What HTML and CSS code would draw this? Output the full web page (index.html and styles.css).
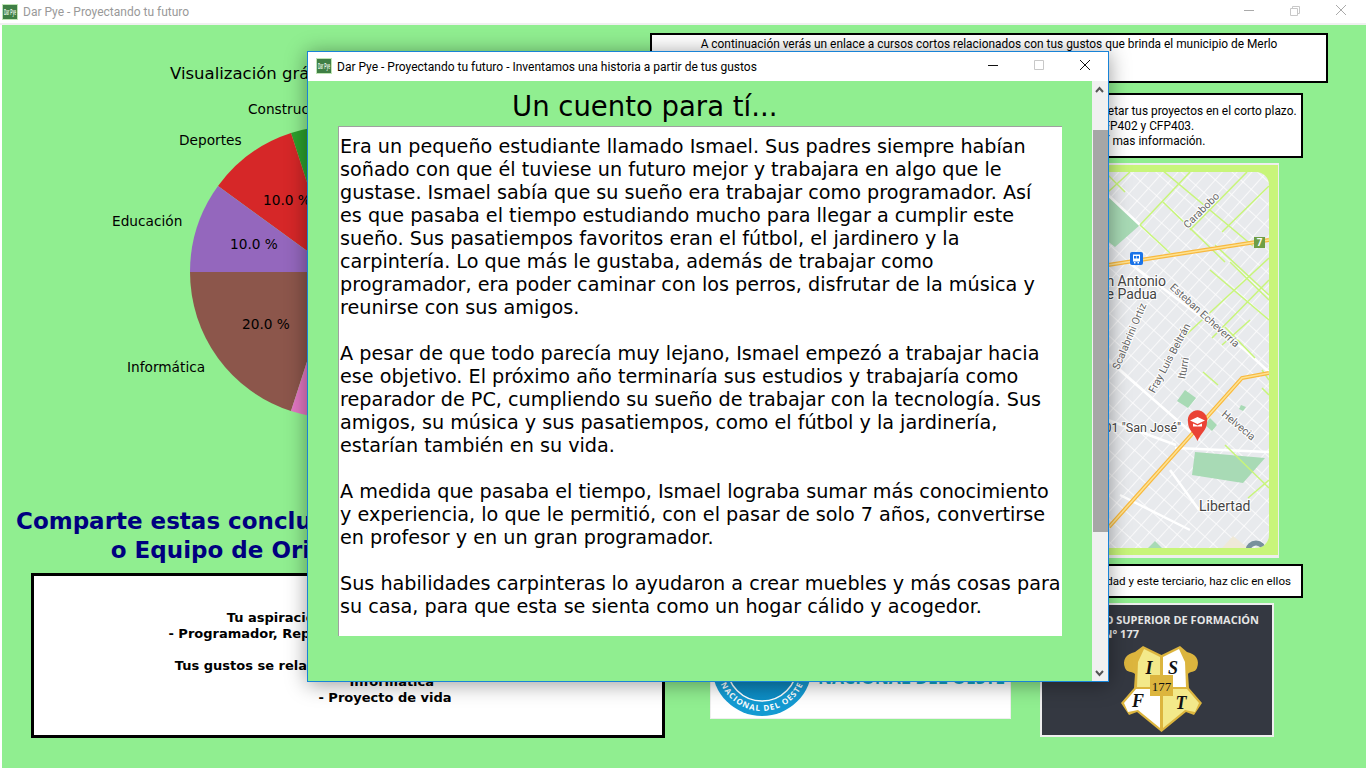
FILE: index.html
```html
<!DOCTYPE html>
<html lang="es">
<head>
    <meta charset="UTF-8">
    <meta name="viewport" content="width=device-width, initial-scale=1.0">
    <title>Dar Pye - Proyectando tu futuro</title>
    <link rel="stylesheet" href="styles.css">
</head>
<body>

<div class="app">
    <div class="titlebar main-titlebar">
        <svg class="app-icon" viewBox="0 0 16 16"><rect width="16" height="16" fill="#bfe5b4"/><rect x="1" y="1" width="14" height="14" fill="#3f7f45"/><text x="2" y="11" class="app-icon-text" textLength="12" lengthAdjust="spacingAndGlyphs">Dar Pye</text></svg>
        <span class="titlebar-text">Dar Pye - Proyectando tu futuro</span>
        <div class="window-buttons faded">
            <svg class="win-btn" viewBox="0 0 46 24"><path d="M18 10.500h10" /></svg>
            <svg class="win-btn light" viewBox="0 0 46 24"><path d="M18.500 8.500h7v7h-7zM20.500 8.500v-2h7v7h-2" /></svg>
            <svg class="win-btn" viewBox="0 0 46 24"><path d="M18 5l10 10M28 5L18 15" /></svg>
        </div>
    </div>

    <div class="main">
        <div class="left-col">
            <svg class="pie" viewBox="2 25 663 480">
                <text x="170" y="79" class="pie-title">Visualización gráfica de tus gustos</text>
                <path d="M336 272L381 133A146 146 0 0 0 291 133Z" fill="#2ca02c"/>
                <path d="M336 272L291 133A146 146 0 0 0 218 186Z" fill="#d62728"/>
                <path d="M336 272L218 186A146 146 0 0 0 190 272Z" fill="#9467bd"/>
                <path d="M336 272L190 272A146 146 0 0 0 291 411Z" fill="#8c564b"/>
                <path d="M336 272L291 411A146 146 0 0 0 381 411Z" fill="#e377c2"/>
                <path d="M336 272L381 411A146 146 0 0 0 482 272Z" fill="#7f7f7f"/>
                <path d="M336 272L482 272A146 146 0 0 0 381 133Z" fill="#1f77b4"/>
                <text x="248" y="114" class="pie-label">Construcción</text>
                <text x="179" y="145" class="pie-label">Deportes</text>
                <text x="112" y="226" class="pie-label">Educación</text>
                <text x="127" y="372" class="pie-label">Informática</text>
                <text x="263" y="205" class="pie-label">10.0 %</text>
                <text x="230" y="249" class="pie-label">10.0 %</text>
                <text x="242" y="329" class="pie-label">20.0 %</text>
            </svg>
            <h2 class="share-title">Comparte estas conclusiones con tu docente tutor o<br>o Equipo de Orientación Educacional</h2>
            <div class="summary">
                Tu aspiración profesional para el futuro es:<br>
                - Programador, Reparador de PCs, Profesor de Informática.<br>
                <br>
                Tus gustos se relacionan con las siguientes áreas de vida<br>
                &nbsp;&nbsp;&nbsp;Informática<br>
                - Proyecto de vida
            </div>
        </div>

        <div class="right-col">
            <div class="note note-courses">A continuación verás un enlace a cursos cortos relacionados con tus gustos que brinda el municipio de Merlo</div>
            <div class="note note-cfp">Para concretar tus proyectos en el corto plazo.<br>Ve a los CFP402 y CFP403.<br>Busca aquí mas información.</div>

            <svg class="map" viewBox="1035 163 244 395">
                <defs>
                    <pattern id="streets-a" width="11" height="17" patternUnits="userSpaceOnUse" patternTransform="rotate(42)">
                        <rect width="11" height="17" fill="#e8eaed"/>
                        <path d="M0 0V17M0 0H11" class="street"/>
                    </pattern>
                    <clipPath id="map-clip"><rect x="1035" y="172" width="234" height="376" rx="13"/></clipPath>
                </defs>
                <rect x="1035" y="163" width="244" height="395" fill="#eeeeee"/>
                <rect x="1035" y="165" width="243" height="390" fill="#c8f57a"/>
                <g clip-path="url(#map-clip)">
                    <rect x="1035" y="172" width="234" height="376" fill="url(#streets-a)"/>
                    <path d="M1100 188L1140 225L1115 247L1100 235Z M1185 390L1196 398L1188 408L1177 401Z M1195 452L1265 458L1243 483L1192 475Z M1210 418L1217 425L1212 431L1205 425Z M1241 405L1246 407L1243 411L1239 409Z M1155 541L1162 548L1148 548Z" fill="#a8dab5"/>
                    <path d="M1222 548L1233 536L1248 548Z" fill="#efe9d8"/>
                    <path d="M1128 262L1245 350L1269 372M1140 225L1108 195M1108 360L1200 440M1175 448L1269 452M1108 420L1176 445M1170 470L1199 510M1120 495L1190 530" class="road"/>
                    <path d="M1108 175L1125 192M1108 192L1130 172M1140 225L1190 172M1140 225L1170 253M1162 170L1253 246M1247 172L1190 230M1269 186L1222 232M1163 202L1225 262M1269 258L1175 345M1215 245L1269 295M1230 262L1269 300M1269 280L1212 338M1250 320L1222 345M1225 327L1255 358M1203 372L1218 385M1225 445L1269 488M1269 480L1248 498M1269 380L1262 370M1262 388L1269 395M1210 270L1269 320" class="green-line"/>
                    <path d="M1108 265L1269 240M1109 527L1242 378L1269 373" class="highway"/>
                    <path d="M1108 265L1269 240M1109 527L1242 378L1269 373" class="highway-core"/>
                    <text x="1201" y="214" class="map-street" text-anchor="middle" transform="rotate(-45 1201 210)">Carabobo</text>
                    <text x="1205" y="319" class="map-street" text-anchor="middle" transform="rotate(42 1205 315)">Esteban Echeverría</text>
                    <text x="1129" y="340" class="map-street" text-anchor="middle" transform="rotate(-67 1129 336)">Scalabrini Ortiz</text>
                    <text x="1169" y="362" class="map-street" text-anchor="middle" transform="rotate(-62 1169 358)">Fray Luis Beltrán</text>
                    <text x="1183" y="372" class="map-street" text-anchor="middle" transform="rotate(-80 1183 368)">Iturri</text>
                    <text x="1239" y="429" class="map-street" text-anchor="middle" transform="rotate(40 1239 425)">Helvecia</text>
                    <text x="1166" y="286" class="map-place" text-anchor="end">San Antonio</text>
                    <text x="1157" y="299" class="map-place" text-anchor="end">de Padua</text>
                    <text x="1181" y="432" class="map-place school" text-anchor="end">Escuela N° 401 "San José"</text>
                    <text x="1199" y="511" class="map-place">Libertad</text>
                    <circle cx="1256" cy="551" r="8" fill="none" stroke="#78909c" stroke-width="5"/>
                </g>
                <rect x="1254" y="237" width="11" height="11" fill="#6f9e45"/>
                <text x="1259.5" y="246" class="map-seven" text-anchor="middle">7</text>
                <rect x="1130" y="252" width="13" height="13" rx="2" fill="#1a73e8"/>
                <path d="M1133 254.500h7v7h-7zM1134 262h1.500v1.500h-1.500zM1137.500 262h1.500v1.500h-1.500z" fill="#fff"/>
                <path d="M1134 256h2.200v2.500h-2.200zM1136.800 256h2.200v2.500h-2.200z" fill="#1a73e8"/>
                <path d="M1197.500 441C1194 433 1188 430 1188 422A9.700 9.700 0 1 1 1207 422C1207 430 1201 433 1197.500 441Z" fill="#ea4335"/>
                <path d="M1197.500 417L1205 420.500L1197.500 424L1190 420.500ZM1193 423.500L1197.500 425.500L1202 423.500V426.500H1193Z" fill="#fff"/>
            </svg>

            <div class="note note-links">Para conocer más sobre esta universidad y este terciario, haz clic en ellos</div>

            <div class="logos">
                <svg class="logo-unlo" viewBox="710 603 301 116">
                    <defs>
                        <linearGradient id="seal" x1="0" y1="0" x2="0" y2="1"><stop offset="0" stop-color="#0e6ea8"/><stop offset="1" stop-color="#0d8fc6"/></linearGradient>
                        <path id="seal-arc" d="M717 666A45 45 0 0 0 807 666"/>
                    </defs>
                    <rect x="710" y="603" width="301" height="116" fill="#eeeeee"/>
                    <rect x="711" y="604" width="299" height="114" fill="#ffffff"/>
                    <circle cx="762" cy="666" r="50" fill="#149ad2"/>
                    <circle cx="762" cy="666" r="35" fill="url(#seal)" stroke="#ffffff" stroke-width="1.500"/>
                    <text class="seal-text"><textPath href="#seal-arc" startOffset="50%" text-anchor="middle">NACIONAL DEL OESTE</textPath></text>
                    <text x="818" y="660" class="unlo-name">UNIVERSIDAD</text>
                    <text x="818" y="684" class="unlo-name" textLength="187" lengthAdjust="spacingAndGlyphs">NACIONAL DEL OESTE</text>
                </svg>
                <svg class="logo-isft" viewBox="1040 603 234 134">
                    <rect x="1040" y="603" width="234" height="134" fill="#eeeeee"/>
                    <rect x="1042" y="605" width="230" height="130" fill="#343841"/>
                    <text x="1259" y="624" class="isft-name" text-anchor="end">INSTITUTO SUPERIOR DE FORMACIÓN</text>
                    <text x="1139" y="638" class="isft-name" text-anchor="end">TÉCNICA N° 177</text>
                    <path d="M1143 646L1161.500 655L1180 646L1187 652C1196 654 1200 660 1197 668C1195 673 1190 671 1188 674L1189 688L1202 703L1194 715L1186 712L1161.500 732L1137 712L1129 715L1121 703L1134 688L1135 674C1132 671 1127 673 1125 668C1122 660 1126 654 1135 652Z" fill="#dcb53e"/>
                    <path d="M1144 649L1160 657V687H1137L1138 662Z" fill="#f3e98a"/>
                    <path d="M1179 649L1163 657V687H1186L1185 662Z" fill="#ffffff"/>
                    <path d="M1160 689V728L1138 710L1128 712L1124 703L1136 689Z" fill="#ffffff"/>
                    <path d="M1163 689V728L1185 710L1195 712L1199 703L1187 689Z" fill="#f3e98a"/>
                    <rect x="1150" y="675" width="23" height="21" fill="#dcb53e"/>
                    <text x="1161.500" y="691" class="isft-number" text-anchor="middle">177</text>
                    <text x="1149" y="674" class="isft-letter" text-anchor="middle">I</text>
                    <text x="1173" y="674" class="isft-letter" text-anchor="middle">S</text>
                    <text x="1138" y="707" class="isft-letter" text-anchor="middle">F</text>
                    <text x="1181" y="709" class="isft-letter" text-anchor="middle">T</text>
                </svg>
            </div>
        </div>
    </div>

    <div class="story-window">
        <div class="titlebar story-titlebar">
            <svg class="app-icon" viewBox="0 0 16 16"><rect width="16" height="16" fill="#bfe5b4"/><rect x="1" y="1" width="14" height="14" fill="#3f7f45"/><text x="2" y="11" class="app-icon-text" textLength="12" lengthAdjust="spacingAndGlyphs">Dar Pye</text></svg>
            <span class="titlebar-text">Dar Pye - Proyectando tu futuro - Inventamos una historia a partir de tus gustos</span>
            <div class="window-buttons">
                <svg class="win-btn" viewBox="0 0 46 29"><path d="M18 13.500h10" /></svg>
                <svg class="win-btn light" viewBox="0 0 46 29"><path d="M18.500 8.500h9v9h-9z" /></svg>
                <svg class="win-btn" viewBox="0 0 46 29"><path d="M18 8l10 10M28 8L18 18" /></svg>
            </div>
        </div>
        <div class="story-content">
            <div class="story-body">
                <h1 class="story-title">Un cuento para tí...</h1>
                <div class="story-text">
                    Era un pequeño estudiante llamado Ismael. Sus padres siempre habían<br>
                    soñado con que él tuviese un futuro mejor y trabajara en algo que le<br>
                    gustase. Ismael sabía que su sueño era trabajar como programador. Así<br>
                    es que pasaba el tiempo estudiando mucho para llegar a cumplir este<br>
                    sueño. Sus pasatiempos favoritos eran el fútbol, el jardinero y la<br>
                    carpintería. Lo que más le gustaba, además de trabajar como<br>
                    programador, era poder caminar con los perros, disfrutar de la música y<br>
                    reunirse con sus amigos.<br>
                    <br>
                    A pesar de que todo parecía muy lejano, Ismael empezó a trabajar hacia<br>
                    ese objetivo. El próximo año terminaría sus estudios y trabajaría como<br>
                    reparador de PC, cumpliendo su sueño de trabajar con la tecnología. Sus<br>
                    amigos, su música y sus pasatiempos, como el fútbol y la jardinería,<br>
                    estarían también en su vida.<br>
                    <br>
                    A medida que pasaba el tiempo, Ismael lograba sumar más conocimiento<br>
                    y experiencia, lo que le permitió, con el pasar de solo 7 años, convertirse<br>
                    en profesor y en un gran programador.<br>
                    <br>
                    Sus habilidades carpinteras lo ayudaron a crear muebles y más cosas para<br>
                    su casa, para que esta se sienta como un hogar cálido y acogedor.
                </div>
            </div>
            <div class="scrollbar">
                <svg class="scroll-arrow" viewBox="0 0 15 10"><path d="M4 8l3.500-4 3.500 4"/></svg>
                <div class="scroll-track"><div class="scroll-thumb"></div></div>
                <svg class="scroll-arrow" viewBox="0 0 15 10"><path d="M4 3l3.500 4 3.500-4"/></svg>
            </div>
        </div>
    </div>
</div>

</body>
</html>
```

FILE: styles.css
```css
* {
    box-sizing: border-box;
}

body {
    margin: 0;
    background-color: #ffffff;
    font-family: "DejaVu Sans", sans-serif;
    color: #000;
    overflow: hidden;
}

.app {
    width: 1366px;
    height: 768px;
    display: flex;
    flex-direction: column;
    overflow: hidden;
}

/* title bars */
.titlebar {
    display: flex;
    align-items: center;
    background-color: #fff;
    font-family: Roboto, sans-serif;
    font-size: 12px;
}

.main-titlebar {
    height: 25px;
    flex-shrink: 0;
    padding: 0 2px;
    border-bottom: 2px solid #f0f0f0;
    color: #999;
}

.app-icon {
    width: 16px;
    height: 16px;
    flex-shrink: 0;
}

.story-titlebar .app-icon {
    margin-bottom: 2px;
}

.app-icon-text {
    font-family: "Liberation Sans", sans-serif;
    font-size: 9px;
    font-weight: bold;
    fill: #e8f3e6;
}

.titlebar-text {
    margin-left: 5px;
    white-space: nowrap;
}

.window-buttons {
    margin-left: auto;
    display: flex;
}

.win-btn {
    width: 46px;
    height: 100%;
    fill: none;
    stroke: #111;
    stroke-width: 1;
}

.main-titlebar .window-buttons {
    height: 24px;
}

.story-titlebar .window-buttons {
    height: 29px;
}

.faded .win-btn {
    stroke: #aaa;
}

.win-btn.light,
.faded .win-btn.light {
    stroke: #c8c8c8;
}

/* page behind the popup */
.main {
    flex: 1;
    display: flex;
    margin-left: 2px;
    background-color: #90ee90;
}

.left-col {
    width: 663px;
    flex-shrink: 0;
}

.pie {
    display: block;
    width: 663px;
    height: 480px;
}

.pie-title {
    font-size: 16.500px;
}

.pie-label {
    font-size: 13.700px;
}

.share-title {
    margin: 2px -15px 8px 14px;
    font-size: 23px;
    line-height: 29px;
    font-weight: bold;
    text-align: center;
    color: #000080;
    white-space: nowrap;
}

.summary {
    width: 634px;
    height: 165px;
    margin-left: 29px;
    padding: 34px 0 0 74px;
    border: 3px solid #000;
    background-color: #fff;
    font-size: 13px;
    line-height: 16px;
    font-weight: bold;
    text-align: center;
    white-space: nowrap;
}

.right-col {
    width: 678px;
    margin-left: -15px;
    padding-top: 8px;
    display: flex;
    flex-direction: column;
    flex-shrink: 0;
}

.note {
    border: 2px solid #000;
    background-color: #fff;
    font-family: Roboto, sans-serif;
    font-size: 11.900px;
    white-space: nowrap;
}

.note-courses {
    height: 50px;
    padding-top: 2px;
    text-align: center;
}

.note-cfp {
    align-self: flex-end;
    width: 268px;
    height: 65px;
    margin: 10px 25px 0 0;
    padding: 9px 0 0 14px;
    line-height: 15px;
}

.map {
    display: block;
    align-self: flex-end;
    width: 244px;
    height: 395px;
    margin: 5px 49px 0 0;
}

.street {
    fill: none;
    stroke: #ffffff;
    stroke-width: 1.500;
}

.road {
    fill: none;
    stroke: #ffffff;
    stroke-width: 2.500;
}

.green-line {
    fill: none;
    stroke: #c8f57a;
    stroke-width: 1.500;
}

.highway {
    fill: none;
    stroke: #f8b93f;
    stroke-width: 4;
}

.highway-core {
    fill: none;
    stroke: #fde293;
    stroke-width: 1.500;
}

.map-street {
    font-family: Roboto, sans-serif;
    font-size: 10.500px;
    fill: #666;
    stroke: #fff;
    stroke-width: 2px;
    paint-order: stroke;
}

.map-place {
    font-family: Roboto, sans-serif;
    font-size: 14px;
    fill: #444;
    stroke: #fff;
    stroke-width: 2px;
    paint-order: stroke;
}

.map-place.school {
    font-size: 12.500px;
}

.map-seven {
    font-family: Roboto, sans-serif;
    font-size: 10px;
    font-weight: bold;
    fill: #fff;
}

.note-links {
    align-self: flex-end;
    width: 415px;
    height: 34px;
    margin: 6px 25px 0 0;
    padding: 8px 10px 0 0;
    font-size: 11.600px;
    text-align: right;
}

.logos {
    display: flex;
    align-items: flex-start;
    gap: 29px;
    margin: 5px 0 0 60px;
}

.logo-unlo {
    display: block;
    width: 301px;
    height: 116px;
}

.seal-text {
    font-family: "Open Sans", sans-serif;
    font-size: 8px;
    font-weight: bold;
    letter-spacing: 1px;
    fill: #fff;
}

.unlo-name {
    font-family: "Open Sans", sans-serif;
    font-size: 17px;
    font-weight: bold;
    fill: #12a3c6;
}

.logo-isft {
    display: block;
    width: 234px;
    height: 134px;
}

.isft-name {
    font-family: "Open Sans", sans-serif;
    font-size: 11px;
    font-weight: bold;
    fill: #e6e6e6;
}

.isft-number {
    font-family: "Liberation Serif", serif;
    font-size: 13px;
    fill: #111;
}

.isft-letter {
    font-family: "Liberation Serif", serif;
    font-size: 18px;
    font-style: italic;
    font-weight: bold;
    fill: #111;
}

/* popup window */
.story-window {
    position: absolute;
    top: 51px;
    left: 307px;
    width: 802px;
    height: 631px;
    display: flex;
    flex-direction: column;
    border: 1px solid #1883d7;
    background-color: #90ee90;
    box-shadow: 0 2px 20px rgba(0, 0, 0, 0.4);
}

.story-titlebar {
    height: 29px;
    flex-shrink: 0;
    padding-left: 8px;
    color: #000;
}

.story-content {
    flex: 1;
    display: flex;
    min-height: 0;
}

.story-body {
    flex: 1;
    padding-left: 30px;
    min-width: 0;
}

.story-title {
    margin: 0 0 0 174px;
    height: 45px;
    font-size: 27.500px;
    line-height: 51px;
    font-weight: normal;
    white-space: nowrap;
}

.story-text {
    width: 724px;
    height: 510px;
    padding: 8px 0 0 1px;
    overflow: hidden;
    border-top: 1px solid #a0a0a0;
    border-left: 1px solid #a0a0a0;
    background-color: #fff;
    font-size: 19.200px;
    line-height: 23px;
    white-space: nowrap;
}

.scrollbar {
    width: 16px;
    display: flex;
    flex-direction: column;
    background-color: #f0f0f0;
}

.scroll-arrow {
    width: 15px;
    height: 10px;
    margin: 3px 0;
    flex-shrink: 0;
    fill: none;
    stroke: #555;
    stroke-width: 2;
}

.scroll-track {
    flex: 1;
    padding-top: 33px;
}

.scroll-thumb {
    height: 402px;
    margin-left: 1px;
    background-color: #a6a6a6;
}
```
